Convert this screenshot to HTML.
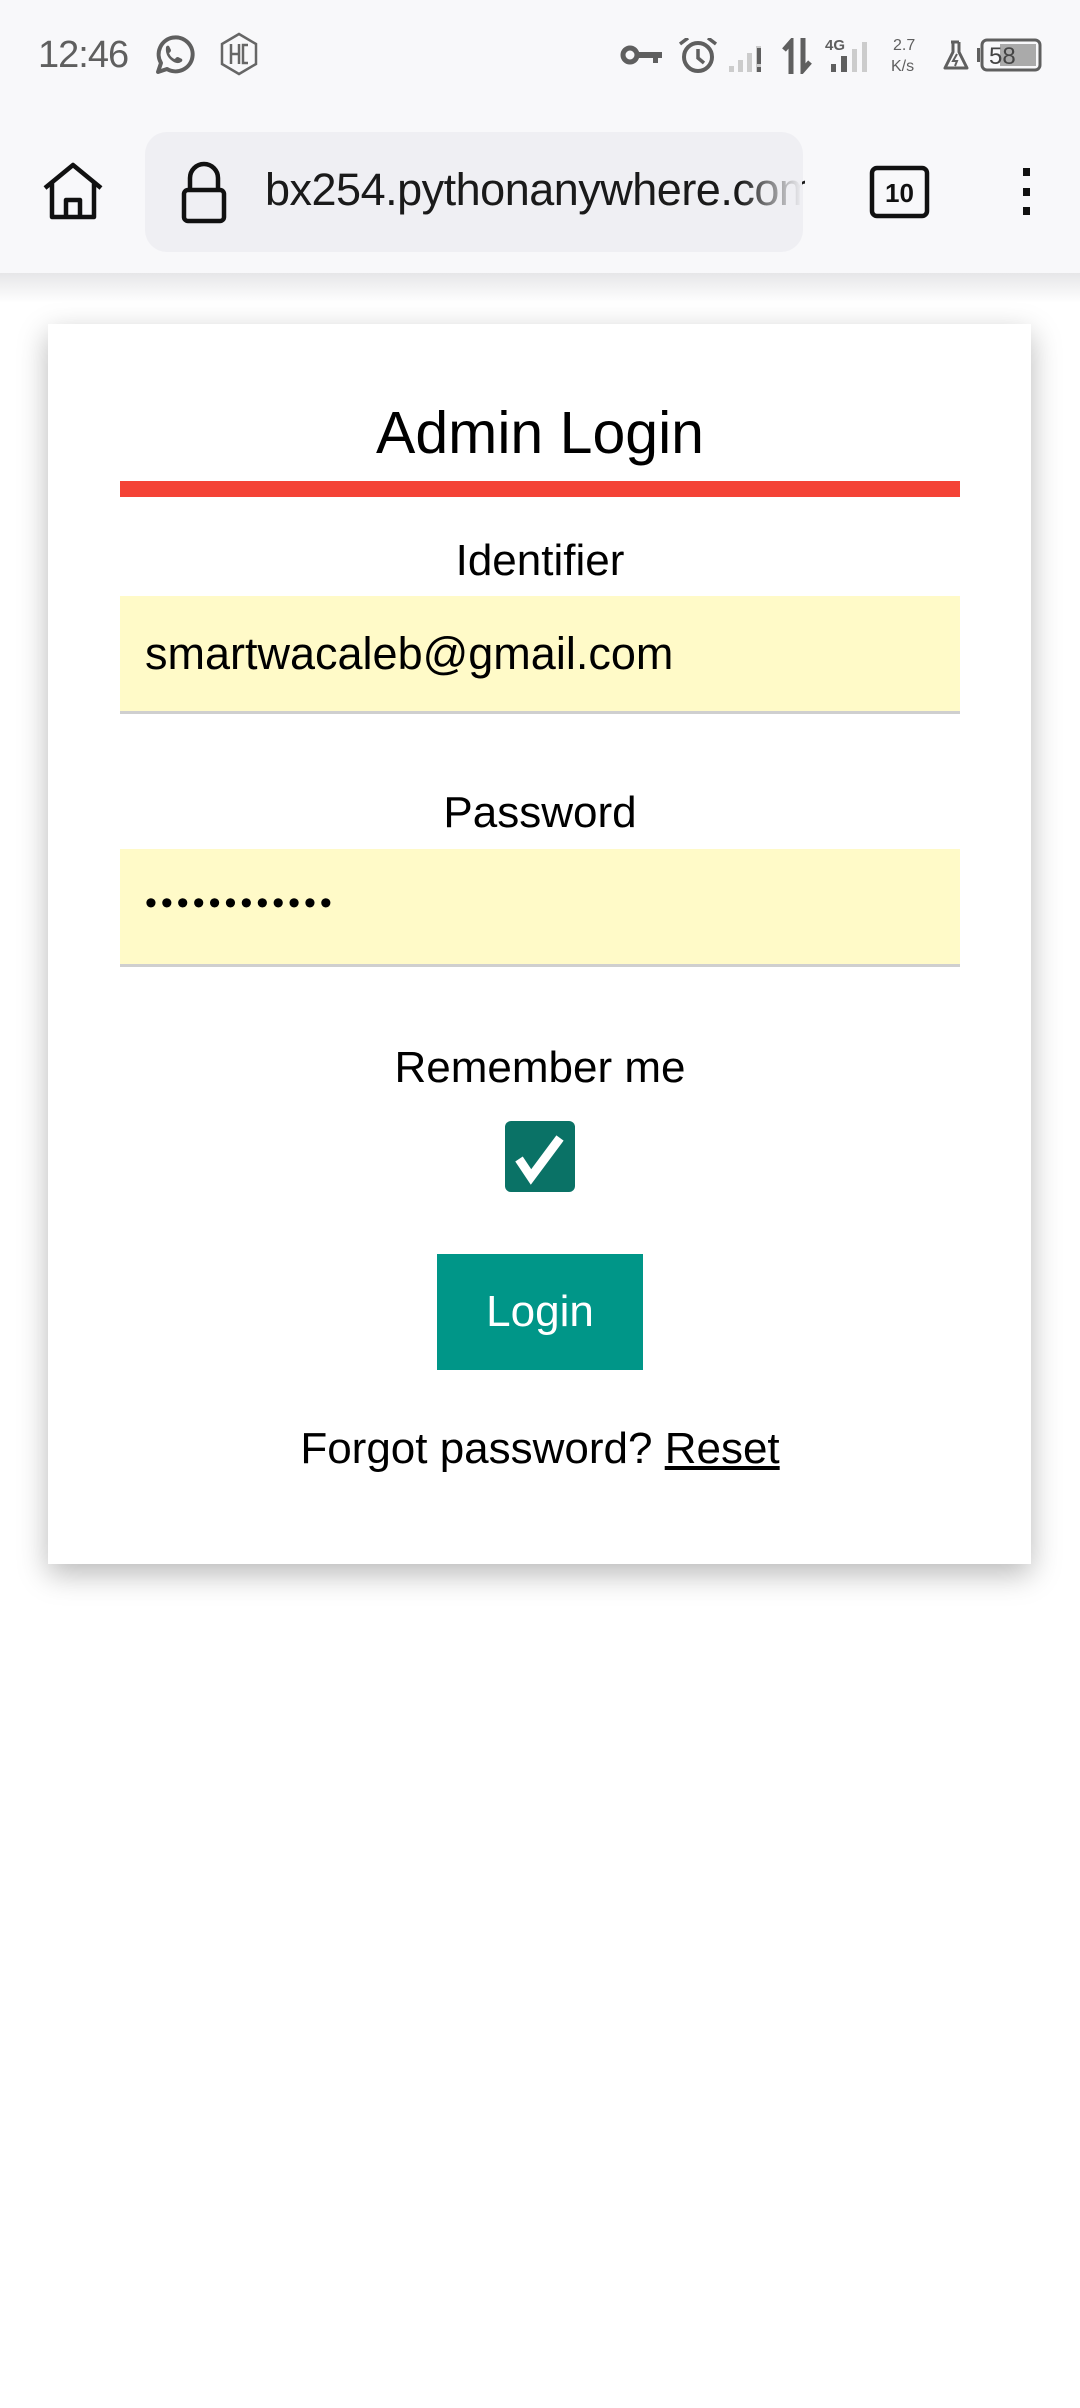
<!DOCTYPE html>
<html><head><meta charset="utf-8">
<style>
*{margin:0;padding:0;box-sizing:border-box}
html,body{width:1080px;height:2408px;background:#fff;overflow:hidden;font-family:"Liberation Sans",sans-serif}
.top{position:absolute;left:0;top:0;width:1080px;height:273px;background:#f8f8fa}
.shadowbar{position:absolute;left:0;top:273px;width:1080px;height:30px;background:linear-gradient(#e6e6e8,#fff)}
.abs{position:absolute}
.time{left:38px;top:34px;font-size:38px;color:#5f5f5f;letter-spacing:-1px}
.url{left:145px;top:132px;width:658px;height:120px;background:#efeff3;border-radius:22px}
.urltext{left:265px;top:164px;font-size:45px;color:#1a1a1a;white-space:nowrap;width:540px;overflow:hidden;letter-spacing:-0.5px}
.fade{left:740px;top:150px;width:62px;height:80px;background:linear-gradient(90deg,rgba(239,239,243,0),#efeff3)}
.card{left:48px;top:324px;width:983px;height:1240px;background:#fff;box-shadow:0 10px 28px rgba(0,0,0,.28)}
.c{position:absolute;left:0;width:1080px;text-align:center;color:#000}
.title{top:399px;font-size:59px}
.red{left:120px;top:481px;width:840px;height:16px;background:#f44336}
.lbl{font-size:44px}
.inp{left:120px;width:840px;height:118px;background:#fffac8;border-bottom:3px solid #cfcfcf}
.inptext{left:145px;font-size:45px;color:#000}
.cb{left:505px;top:1121px;width:70px;height:71px;background:#0a7266;border-radius:6px}
.btn{left:437px;top:1254px;width:206px;height:116px;background:#009688;color:#fff;font-size:44px;text-align:center;line-height:116px}
</style></head><body>
<div class="top"></div>
<div class="shadowbar"></div>
<div class="abs time">12:46</div>
<svg class="abs" style="left:150px;top:32px" width="46" height="46" viewBox="0 0 46 46"><path d="M8 40 L11 31 A17 17 0 1 1 17 37 Z" fill="none" stroke="#5f5f5f" stroke-width="4" stroke-linejoin="round"/><path d="M16 15 q1 -2 3 -1 l2 4 q0 2 -2 3 q2 5 6 6 q1 -2 3 -2 l4 2 q1 2 -1 3 q-4 3 -10 -2 q-6 -5 -5 -13z" fill="#5f5f5f"/></svg>
<svg class="abs" style="left:219px;top:32px" width="40" height="44" viewBox="0 0 40 44"><path d="M20 2 L37 12 L37 32 L20 42 L3 32 L3 12 Z" fill="none" stroke="#666" stroke-width="2.5"/><path d="M12 12 V32 M12 22 H20 M20 12 V32 M29 13 H24 V31 H29" fill="none" stroke="#666" stroke-width="2.5"/></svg>
<svg class="abs" style="left:620px;top:38px" width="425" height="36" viewBox="0 0 425 36">
<circle cx="10" cy="17" r="7" fill="none" stroke="#5f5f5f" stroke-width="5"/><path d="M17 14 H42 V20 H38 V25 H33 V20 H17Z" fill="#5f5f5f"/>
<circle cx="78" cy="19" r="14" fill="none" stroke="#5f5f5f" stroke-width="4"/><path d="M78 11 V20 L84 25" fill="none" stroke="#5f5f5f" stroke-width="3.5"/><path d="M60 6 L68 0 M96 6 L88 0" stroke="#5f5f5f" stroke-width="3.5"/>
<rect x="109" y="28" width="5" height="6" fill="#ccc"/><rect x="118" y="22" width="5" height="12" fill="#ccc"/><rect x="127" y="15" width="5" height="19" fill="#ccc"/><rect x="136" y="8" width="5" height="26" fill="#ccc"/><rect x="137" y="10" width="4" height="16" fill="#5f5f5f"/><rect x="137" y="29" width="4" height="5" fill="#5f5f5f"/>
<path d="M171 36 V4 L164 12" fill="none" stroke="#5f5f5f" stroke-width="5"/><path d="M183 0 V32 L190 24" fill="none" stroke="#5f5f5f" stroke-width="5"/>
<text x="205" y="12" font-size="15" font-weight="bold" fill="#5f5f5f" font-family="Liberation Sans">4G</text>
<rect x="211" y="26" width="5" height="8" fill="#5f5f5f"/><rect x="221" y="18" width="6" height="16" fill="#5f5f5f"/><rect x="232" y="11" width="5" height="23" fill="#ccc"/><rect x="242" y="4" width="5" height="30" fill="#ccc"/>
<text x="273" y="12" font-size="16" fill="#5f5f5f" font-family="Liberation Sans">2.7</text><text x="271" y="33" font-size="16" fill="#5f5f5f" font-family="Liberation Sans">K/s</text>
<path d="M331 4 H339 M333 4 V14 L325 30 H347 L339 14 V4" fill="none" stroke="#5f5f5f" stroke-width="3" stroke-linejoin="round"/><path d="M337 16 L333 23 H337 L335 28" fill="none" stroke="#5f5f5f" stroke-width="2"/>
<rect x="357" y="10" width="3" height="14" fill="#5f5f5f"/><rect x="362" y="2" width="58" height="30" rx="5" fill="none" stroke="#5f5f5f" stroke-width="3"/><rect x="380" y="6" width="36" height="22" fill="#aaa"/><text x="369" y="26" font-size="24" fill="#444" font-family="Liberation Sans">58</text>
</svg>
<svg class="abs" style="left:41px;top:162px" width="64" height="58" viewBox="0 0 64 58"><path d="M4 26 L32 3 L60 26 M11 21 V55 H53 V21 M25 55 V38 H39 V55" fill="none" stroke="#111" stroke-width="4.5" stroke-linejoin="round"/></svg>
<div class="abs url"></div>
<svg class="abs" style="left:180px;top:160px" width="48" height="64" viewBox="0 0 48 64"><path d="M10 30 V18 A14 14 0 0 1 38 18 V30" fill="none" stroke="#111" stroke-width="4.5"/><rect x="4" y="30" width="40" height="31" rx="4" fill="none" stroke="#111" stroke-width="4.5"/></svg>
<div class="abs urltext">bx254.pythonanywhere.com</div>
<div class="abs fade"></div>
<svg class="abs" style="left:868px;top:165px" width="64" height="54" viewBox="0 0 64 54"><rect x="4" y="3" width="55" height="48" rx="5" fill="none" stroke="#111" stroke-width="4.5"/><text x="31.5" y="37" text-anchor="middle" font-size="26" font-weight="bold" fill="#111" font-family="Liberation Sans">10</text></svg>
<div class="abs" style="left:1023px;top:168px;width:7px;height:8px;background:#111"></div>
<div class="abs" style="left:1023px;top:188px;width:7px;height:8px;background:#111"></div>
<div class="abs" style="left:1023px;top:207px;width:7px;height:8px;background:#111"></div>

<div class="abs card"></div>
<div class="c title">Admin Login</div>
<div class="abs red"></div>
<div class="c lbl" style="top:536px">Identifier</div>
<div class="abs inp" style="top:596px"></div>
<div class="abs inptext" style="top:628px">smartwacaleb@gmail.com</div>
<div class="c lbl" style="top:788px">Password</div>
<div class="abs inp" style="top:849px"></div>
<div class="abs inptext" style="top:884px;font-size:34px;letter-spacing:4px">••••••••••••</div>
<div class="c lbl" style="top:1043px">Remember me</div>
<div class="abs cb"></div>
<svg class="abs" style="left:505px;top:1121px" width="70" height="71" viewBox="0 0 70 71"><path d="M14 38 L26 56 L55 17" fill="none" stroke="#fff" stroke-width="9"/></svg>
<div class="abs btn">Login</div>
<div class="c lbl" style="top:1424px">Forgot password? <span style="text-decoration:underline">Reset</span></div>
</body></html>
